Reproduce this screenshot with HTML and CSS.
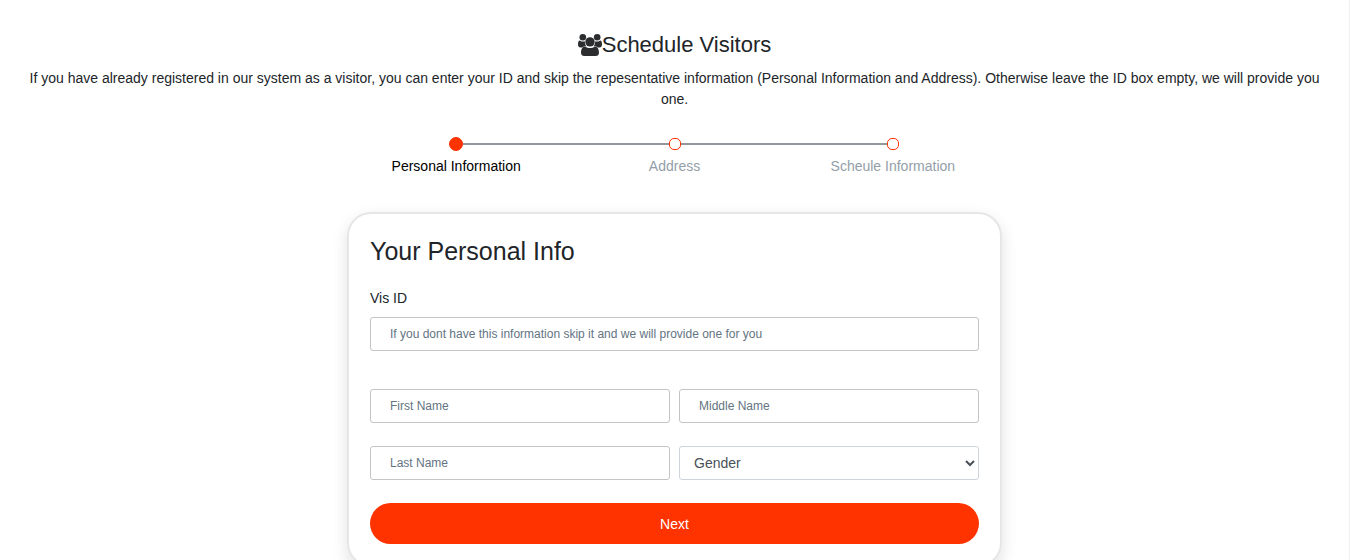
FILE: index.html
```html
<!DOCTYPE html>
<html lang="en">
<head>
<meta charset="utf-8">
<meta name="viewport" content="width=device-width, initial-scale=1">
<title>Schedule Visitors</title>
<link rel="stylesheet" href="styles.css">
</head>
<body>
<main class="page">
  <header class="intro">
    <h1 class="intro-title">
      <svg class="intro-icon" viewBox="0 0 24 22" aria-hidden="true">
        <circle cx="4.800" cy="3.300" r="3.300"/>
        <circle cx="19.200" cy="3.300" r="3.300"/>
        <path d="M1.800 6.500C3 7.400 4 7.600 5.200 7.600 6 7.600 6.400 7.400 6.900 7.200 6.700 9.200 7.300 10.900 8.400 12.200 6.500 12.200 5 12.500 4 13.400H2.400C.8 13.400 0 12.300 0 10.500 0 8.500.4 6.500 1.800 6.500Z"/>
        <path d="M22.200 6.500C21 7.400 20 7.600 18.800 7.600 18 7.600 17.600 7.400 17.100 7.200 17.300 9.200 16.700 10.900 15.600 12.200 17.500 12.200 19 12.500 20 13.400H21.600C23.200 13.400 24 12.300 24 10.500 24 8.500 23.600 6.500 22.200 6.500Z"/>
        <circle cx="12" cy="7.900" r="4.700"/>
        <path d="M7.300 12.500C10 14.600 14 14.600 16.700 12.500 19.800 12.500 21 15.500 21 18.700 21 20.700 19.700 22 17.700 22H6.300C4.300 22 3 20.700 3 18.700 3 15.500 4.200 12.500 7.300 12.500Z"/>
      </svg>Schedule Visitors
    </h1>
    <p class="intro-text">If you have already registered in our system as a visitor, you can enter your ID and skip the repesentative information (Personal Information and Address). Otherwise leave the ID box empty, we will provide you one.</p>
  </header>

  <ol class="steps">
    <li class="step step-active" aria-current="step"><span class="step-track"><span class="step-dot"></span></span>Personal Information</li>
    <li class="step"><span class="step-track"><span class="step-dot"></span></span>Address</li>
    <li class="step"><span class="step-track"><span class="step-dot"></span></span>Scheule Information</li>
  </ol>

  <form class="card">
    <h2 class="card-title">Your Personal Info</h2>
    <label class="label" for="vis-id">Vis ID</label>
    <input class="field" id="vis-id" type="text" placeholder="If you dont have this information skip it and we will provide one for you">
    <div class="fields">
      <input class="field" type="text" aria-label="First Name" placeholder="First Name">
      <input class="field" type="text" aria-label="Middle Name" placeholder="Middle Name">
      <input class="field" type="text" aria-label="Last Name" placeholder="Last Name">
      <select class="field field-select" aria-label="Gender">
        <option>Gender</option>
        <option>Male</option>
        <option>Female</option>
      </select>
    </div>
    <button class="next" type="button">Next</button>
  </form>
</main>
</body>
</html>
```

FILE: styles.css
```css
* {
  box-sizing: border-box;
}

body {
  margin: 0;
  background: #fff;
  color: #212529;
  font: 14px/21px "Liberation Sans", Arial, sans-serif;
}

.page {
  min-height: 100vh;
  padding: 30px 20px 24px;
  border-right: 1px solid #eee;
}

.intro {
  text-align: center;
}

.intro-title {
  display: flex;
  justify-content: center;
  align-items: center;
  margin: 0 0 8px;
  font-size: 22px;
  line-height: 30px;
  font-weight: 400;
}

.intro-icon {
  width: 24px;
  height: 22px;
  fill: #2c2d2f;
}

.intro-text {
  margin: 0;
}

.steps {
  display: grid;
  grid-template-columns: repeat(3, 1fr);
  max-width: 655px;
  margin: 27px auto 35px;
  padding: 0;
  list-style: none;
  text-align: center;
  color: #939ea8;
}

.step-track {
  display: flex;
  align-items: center;
  height: 14px;
  margin-bottom: 5px;
}

.step-track::before,
.step-track::after {
  content: "";
  flex: 1;
  height: 2px;
  background: #92989e;
}

.step:first-child .step-track::before,
.step:last-child .step-track::after {
  background: transparent;
}

.step-dot {
  width: 12px;
  height: 12px;
  border: 1px solid #ff3300;
  border-radius: 5px;
  background: #fff;
}

.step-active {
  color: #000;
}

.step-active .step-dot {
  width: 14px;
  height: 14px;
  border-radius: 50%;
  background: #ff3300;
}

.card {
  max-width: 655px;
  margin: 0 auto;
  padding: 21px;
  border: 2px solid #e6e6e6;
  border-radius: 24px;
  box-shadow: 0 6px 16px rgba(0, 0, 0, 0.12);
}

.card-title {
  margin: 0 0 21px;
  font-size: 25px;
  line-height: 32px;
  font-weight: 400;
}

.label {
  display: block;
  margin-bottom: 8px;
}

.field {
  display: block;
  width: 100%;
  height: 34px;
  padding: 0 19px;
  border: 1px solid #c4c4c4;
  border-radius: 3px;
  background: #fff;
  color: #495057;
  font: 12px "Liberation Sans", Arial, sans-serif;
}

.field::placeholder {
  color: #637482;
  opacity: 1;
}

.field-select {
  padding: 0 10px;
  border-color: #ced4da;
  font-size: 14px;
}

.fields {
  display: grid;
  grid-template-columns: 1fr 1fr;
  gap: 23px 9px;
  margin: 38px 0 23px;
}

.next {
  display: block;
  width: 100%;
  height: 41px;
  border: 0;
  border-radius: 21px;
  background: #ff3300;
  color: #fff;
  font: 14px "Liberation Sans", Arial, sans-serif;
}
```
